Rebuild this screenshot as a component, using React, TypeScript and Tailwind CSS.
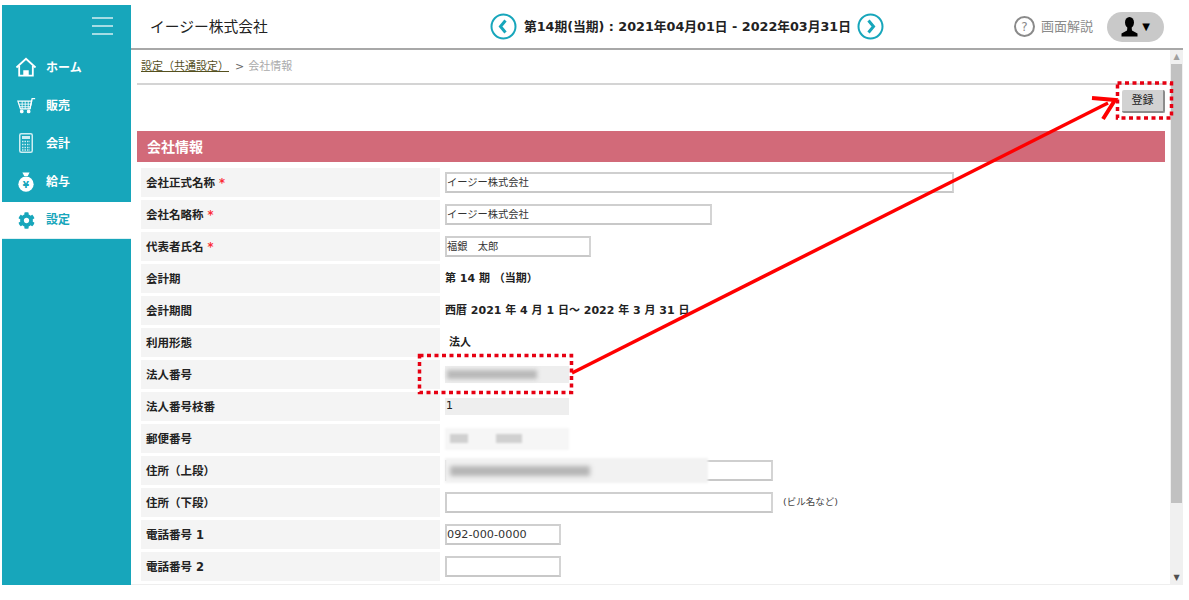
import React from 'react';
import { FaCog } from 'react-icons/fa';

const font = { fontFamily: '"DejaVu Sans", "Noto Sans CJK JP", sans-serif' };

function HomeIcon() {
  return (
    <svg width="22" height="20" viewBox="0 0 24 22" fill="none" stroke="white" strokeWidth="2">
      <path d="M1.500 11.500L12 2l10.500 9.500" />
      <path d="M4.500 10v10.500h15V10" />
      <path d="M10 20.500v-5h4v5" fill="white" />
    </svg>
  );
}

function CartIcon() {
  return (
    <svg width="19" height="18" viewBox="0 0 22 20" fill="none" stroke="white" strokeWidth="1.300">
      <path d="M1 5.500h16l-2 9H4z" />
      <path d="M2 9h14.500M3 12h13M6 5.500v9M9.500 5.500v9M13 5.500v9" strokeWidth="1" />
      <path d="M15 14.500L17.500 2.500H21" strokeWidth="1.500" />
      <circle cx="5.500" cy="17.500" r="1.500" fill="white" />
      <circle cx="13.500" cy="17.500" r="1.500" fill="white" />
    </svg>
  );
}

function CalcIcon() {
  return (
    <svg width="14" height="20" viewBox="0 0 14 20" fill="none">
      <rect x="0.750" y="0.750" width="12.500" height="18.500" rx="1.500" stroke="#cfeef2" strokeWidth="1.500" />
      <rect x="3" y="3" width="8" height="3" fill="#cfeef2" />
      <path d="M3 8.500h8M3 11.500h8M3 14.500h8M3 17h8" stroke="#cfeef2" strokeWidth="1.300" strokeDasharray="1.500 1" />
    </svg>
  );
}

function MoneyBag() {
  return (
    <svg width="18" height="21" viewBox="0 0 20 22" fill="white">
      <path d="M6 1h8l-2 4H8z" />
      <circle cx="10" cy="14" r="8.500" />
      <text x="10" y="18" textAnchor="middle" fontSize="10" fontWeight="700" fill="#17a6bb">¥</text>
    </svg>
  );
}

function UserIcon() {
  return (
    <svg width="17" height="20" viewBox="0 0 17 20" fill="black">
      <ellipse cx="8.500" cy="5.500" rx="4.500" ry="5.500" />
      <path d="M6.500 9.500h4l.5 4 5.500 3v3H.5v-3l5.500-3z" />
    </svg>
  );
}

function RoundArrow({ dir }: { dir: 'left' | 'right' }) {
  return (
    <svg width="27" height="27" viewBox="0 0 27 27" fill="none" stroke="#17a6bb">
      <circle cx="13.500" cy="13.500" r="12" strokeWidth="2" />
      <path d={dir === 'left' ? 'M15.500 7.500l-5 6 5 6' : 'M11.500 7.500l5 6-5 6'} strokeWidth="3" />
    </svg>
  );
}

const navItems = [
  { label: 'ホーム', icon: <HomeIcon /> },
  { label: '販売', icon: <CartIcon /> },
  { label: '会計', icon: <CalcIcon /> },
  { label: '給与', icon: <MoneyBag /> },
];

function Row({ label, required, children }: { label: string; required?: boolean; children?: React.ReactNode }) {
  return (
    <div className="flex h-[29px] mb-[3px] ml-[4px]">
      <div className="w-[299px] bg-[#f4f4f4] pl-[5px] pt-[2px] flex items-center text-[11.500px] font-bold text-[#222]">
        {label}
        {required && <span className="text-red-500 ml-[4px]">*</span>}
      </div>
      <div className="flex-1 pl-[5px] flex items-center text-[11px] text-[#222]">{children}</div>
    </div>
  );
}

function Field({ w, value, size = 'text-[10.250px]' }: { w: string; value?: string; size?: string }) {
  return (
    <div className={`${w} ${size} h-[21px] pt-[1px] border-2 border-t-[#cfcfcf] border-l-[#cfcfcf] border-r-[#d4d4d4] border-b-[#c8c8c8] bg-white flex items-center text-[#333]`}>
      {value}
    </div>
  );
}

export default function App() {
  return (
    <div className="relative h-[600px] w-[1189px] overflow-hidden bg-white pt-[5px] pl-[2px]" style={font}>
      <div className="flex h-[580px] w-[1181px]">
        {/* Sidebar */}
        <aside className="w-[129px] shrink-0 bg-[#17a6bb] text-white">
          <div className="h-[43px] flex justify-end pr-[18px] pt-[12px]">
            <div className="w-[21px] flex flex-col gap-[6px]">
              <div className="h-[2px] bg-[#a5dce4]" />
              <div className="h-[2px] bg-[#a5dce4]" />
              <div className="h-[2px] bg-[#a5dce4]" />
            </div>
          </div>
          {navItems.map(item => (
            <div key={item.label} className="h-[38px] flex items-center text-[12px] font-bold">
              <span className="w-[44px] flex justify-center pl-[8px] pr-[4px]">{item.icon}</span>
              <span className="pt-[1px]">{item.label}</span>
            </div>
          ))}
          <div className="mt-[2px] h-[37px] bg-white text-[#17a6bb] flex items-center text-[12px] font-bold border-b border-[#dff1f4]">
            <span className="w-[44px] flex justify-center pl-[8px] pr-[4px]">
              <FaCog className="h-[17px] w-[17px]" />
            </span>
            設定
          </div>
        </aside>

        <div className="flex-1 flex flex-col min-w-0">
          {/* Header */}
          <header className="h-[45px] shrink-0 border-b-2 border-[#a8a8a8] flex items-center">
            <div className="w-[359px] pl-[19px] pt-[1px] text-[14.750px] text-[#222]">イージー株式会社</div>
            <div className="flex items-center text-[12.750px] font-bold text-[#222]">
              <RoundArrow dir="left" />
              <span className="ml-[7px] mr-[6px]">第14期(当期) : 2021年04月01日 - 2022年03月31日</span>
              <RoundArrow dir="right" />
            </div>
            <div className="ml-auto flex items-center pr-[19px]">
              <span className="h-[21px] w-[21px] rounded-full border-2 border-[#8a8a8a] text-[#8a8a8a] text-[12px] flex items-center justify-center">?</span>
              <span className="ml-[6px] text-[13px] text-[#8a8a8a]">画面解説</span>
              <div className="ml-[14px] h-[30px] w-[57px] rounded-full bg-[#c9c9c9] flex items-center justify-center gap-[4px] text-black">
                <UserIcon />
                <span className="text-[10px]">▼</span>
              </div>
            </div>
          </header>

          <div className="flex-1 flex min-h-0">
            {/* Content */}
            <main className="flex-1 min-w-0 pl-[6px] pr-[5px] overflow-hidden border-b border-[#eeeeee]">
              <div className="h-[35px] border-b-2 border-[#d4d4d4] flex items-center text-[11px] pt-[2px]">
                <span className="underline text-[#55501e] decoration-[#55501e] ml-[4px]">設定（共通設定）</span>
                <span className="ml-[6px] text-[#666]">&gt;</span>
                <span className="ml-[4px] text-[#aaaaaa]">会社情報</span>
              </div>
              <div className="h-[46px] flex justify-end items-start pt-[5px]">
                <button className="h-[23px] w-[43px] pt-[2px] rounded-[2px] bg-[#d2d2d2] border-r-2 border-b-2 border-[#8c8c8c] text-[11px] text-[#222]">登録</button>
              </div>
              <div className="h-[31px] bg-[#d26a79] text-white text-[14px] font-bold flex items-center pl-[10px] pt-[1px] mb-[6px]">会社情報</div>

              <Row label="会社正式名称" required><Field w="w-[509px]" value="イージー株式会社" /></Row>
              <Row label="会社名略称" required><Field w="w-[267px]" value="イージー株式会社" /></Row>
              <Row label="代表者氏名" required><Field w="w-[146px]" value="福銀　太郎" /></Row>
              <Row label="会計期"><span className="font-bold pt-[2px]">第 14 期 （当期）</span></Row>
              <Row label="会計期間"><span className="font-bold pt-[1px]">西暦 2021 年 4 月 1 日～ 2022 年 3 月 31 日</span></Row>
              <Row label="利用形態"><span className="font-bold ml-[4px] pt-[2px]">法人</span></Row>
              <Row label="法人番号">
                <div className="w-[124px] h-[17px] bg-[#eeeeee] flex items-center pl-[2px]">
                  <div className="h-[9px] w-[90px] bg-[#b8b8b8] blur-[2px]" />
                </div>
              </Row>
              <Row label="法人番号枝番">
                <div className="w-[124px] h-[17px] bg-[#eeeeee] flex items-center pl-[1px]">1</div>
              </Row>
              <Row label="郵便番号">
                <div className="flex w-[124px] h-[22px] bg-[#f6f6f6] items-center gap-[28px] pl-[5px] blur-[1px]">
                  <div className="h-[9px] w-[18px] bg-[#d0d0d0]" />
                  <div className="h-[9px] w-[26px] bg-[#d0d0d0]" />
                </div>
              </Row>
              <Row label="住所（上段）">
                <div className="relative">
                  <Field w="w-[328px]" />
                  <div className="absolute left-0 -top-[2px] h-[25px] w-[263px] bg-[#f2f2f2] flex items-center pl-[5px] blur-[1px]">
                    <div className="h-[10px] w-[140px] bg-[#b4b4b4] blur-[2px]" />
                  </div>
                </div>
              </Row>
              <Row label="住所（下段）">
                <Field w="w-[328px]" />
                <span className="ml-[10px] text-[9.500px] text-[#444]">(ビル名など)</span>
              </Row>
              <Row label="電話番号 1"><Field w="w-[116px]" size="text-[11.250px]" value="092-000-0000" /></Row>
              <Row label="電話番号 2"><Field w="w-[116px]" /></Row>
              <Row label="" />
            </main>

            {/* Scrollbar */}
            <div className="w-[13px] shrink-0 bg-[#f0f0f0] flex flex-col items-center">
              <div className="h-[14px] text-[8px] leading-[14px] text-[#a0a0a0]">▲</div>
              <div className="w-[11px] h-[439px] bg-[#c1c1c1]" />
              <div className="mt-auto h-[14px] text-[8px] leading-[14px] text-[#505050]">▼</div>
            </div>
          </div>
        </div>
      </div>

      {/* Annotation overlay */}
      <svg className="absolute left-0 top-0 pointer-events-none" width="1189" height="600" fill="none">
        <rect x="419.500" y="355.500" width="152" height="37" stroke="#e60012" strokeWidth="3.500" strokeDasharray="4 3.500" />
        <rect x="1117.500" y="83" width="54" height="35" stroke="#e60012" strokeWidth="3.500" strokeDasharray="4 3.500" />
        <path d="M572 373L1108 103" stroke="#ff0000" strokeWidth="3.500" />
        <path d="M1092 98L1115 100L1103 119" stroke="#ff0000" strokeWidth="4" />
      </svg>
    </div>
  );
}
